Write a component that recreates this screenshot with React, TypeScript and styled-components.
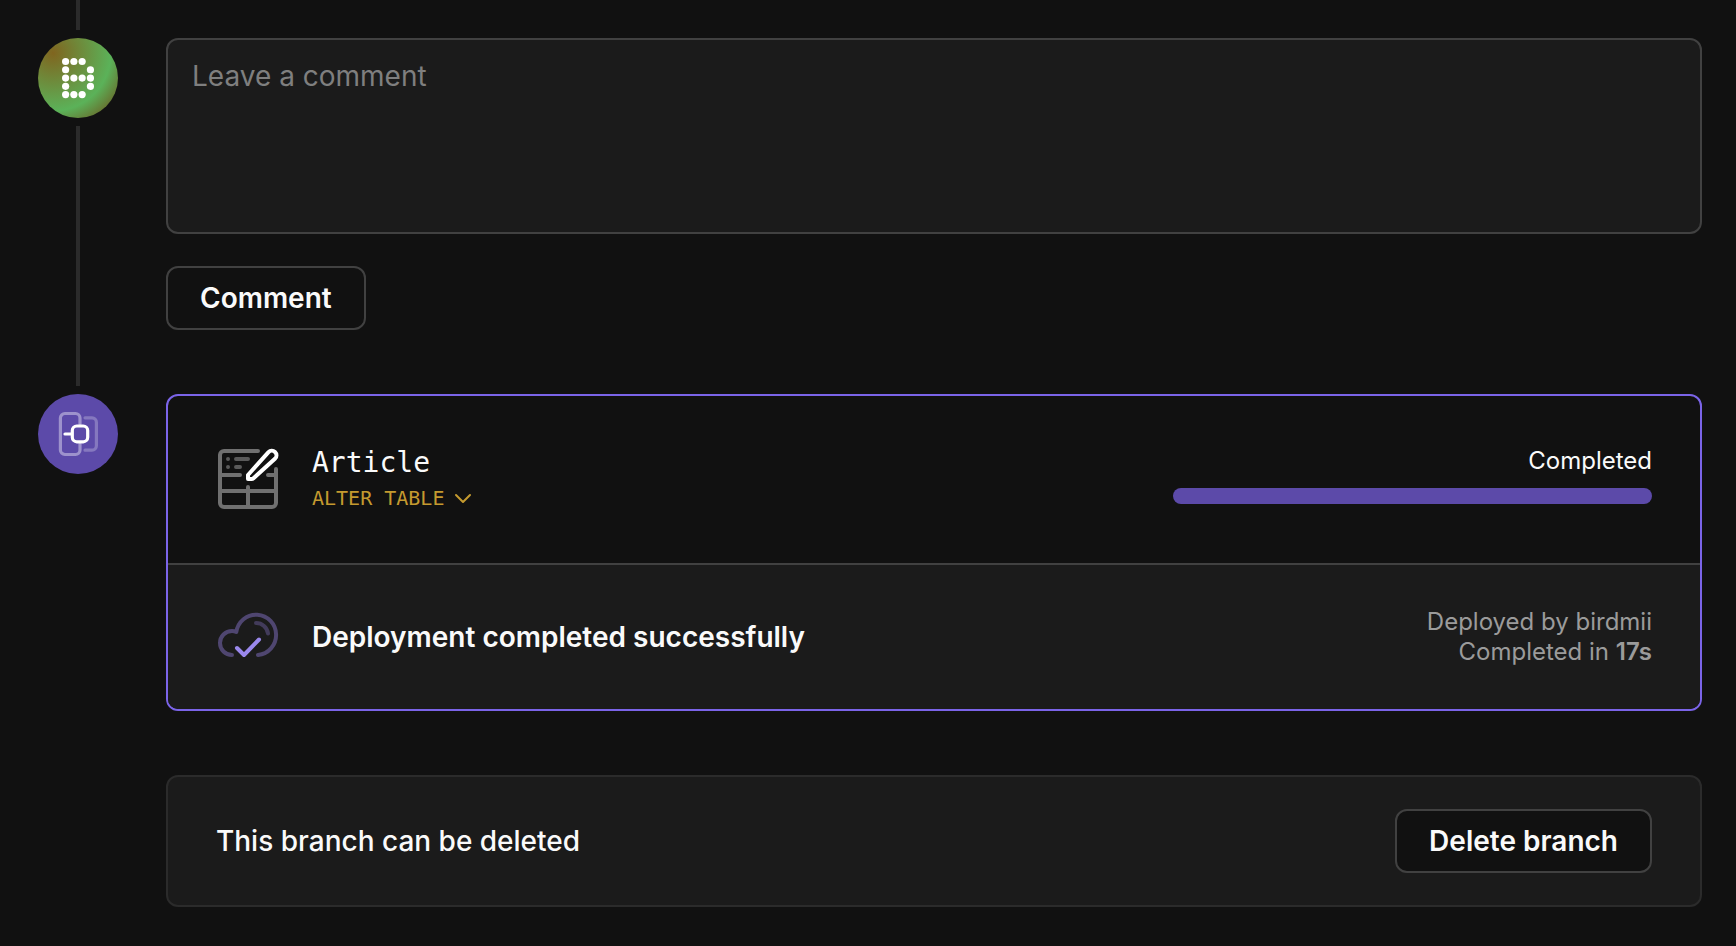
import React from 'react';
import styled, { createGlobalStyle } from 'styled-components';

const color = {
  page: '#111111',
  surface: '#1b1b1b',
  line: '#2b2b2b',
  border: '#414141',
  text: '#fafafa',
  muted: '#9b9b9b',
  placeholder: '#7f7f7f',
  accent: '#7b64e8',
  accentFill: '#5c4aa9',
  warning: '#c49a2f',
};

const GlobalStyle = createGlobalStyle`
  *, *::before, *::after { box-sizing: border-box; }
  body {
    margin: 0;
    background: ${color.page};
    color: ${color.text};
    font-family: Inter, 'Liberation Sans', sans-serif;
    font-size: 28px;
    line-height: 40px;
  }
  svg { display: block; flex: none; }
`;

const Page = styled.main`
  padding: 0 34px 36px 38px;
`;

const Entry = styled.section`
  display: grid;
  grid-template-columns: 80px minmax(0, 1fr);
  column-gap: 48px;
`;

const Rail = styled.div`
  display: flex;
  flex-direction: column;
  align-items: center;
  gap: 8px;
`;

const RailLine = styled.span<{ $stub?: boolean }>`
  width: 4px;
  background: ${color.line};
  flex: ${(p) => (p.$stub ? '0 0 30px' : '1 1 auto')};
`;

const Badge = styled.span<{ $background: string }>`
  display: flex;
  align-items: center;
  justify-content: center;
  flex: none;
  width: 80px;
  height: 80px;
  border-radius: 50%;
  background: ${(p) => p.$background};
`;

const RailEnd = styled(Rail)`
  padding-bottom: 8px;
`;

const CommentForm = styled.form`
  display: flex;
  flex-direction: column;
  align-items: flex-start;
  gap: 32px;
  padding: 38px 0 64px;
`;

const CommentBox = styled.textarea`
  display: block;
  width: 100%;
  height: 196px;
  padding: 16px 24px;
  border: 2px solid ${color.border};
  border-radius: 12px;
  background: ${color.surface};
  color: ${color.text};
  font: inherit;
  resize: none;
  &::placeholder { color: ${color.placeholder}; opacity: 1; }
`;

const Button = styled.button`
  height: 64px;
  padding: 0 32px;
  border: 2px solid ${color.border};
  border-radius: 12px;
  background: ${color.page};
  color: ${color.text};
  font: inherit;
  font-weight: 600;
  white-space: nowrap;
  cursor: pointer;
`;

const Stack = styled.div`
  display: flex;
  flex-direction: column;
  gap: 64px;
`;

const DeployCard = styled.article`
  border: 2px solid ${color.accent};
  border-radius: 12px;
  overflow: hidden;
`;

const ChangeRow = styled.div`
  display: grid;
  grid-template-columns: 2fr 1fr;
  align-items: start;
  min-height: 169px;
  padding: 48px;
  border-bottom: 2px solid ${color.border};
`;

const StatusRow = styled.div`
  display: flex;
  align-items: center;
  justify-content: space-between;
  min-height: 144px;
  padding: 0 48px;
  background: ${color.surface};
`;

const Lead = styled.div`
  display: flex;
  align-items: center;
  gap: 32px;
`;

const TableName = styled.div`
  font-family: 'DejaVu Sans Mono', monospace;
  line-height: 38px;
`;

const ChangeToggle = styled.button`
  display: flex;
  align-items: center;
  gap: 10px;
  padding: 0;
  border: 0;
  background: none;
  color: ${color.warning};
  font-family: 'DejaVu Sans Mono', monospace;
  font-size: 20px;
  line-height: 32px;
  cursor: pointer;
`;

const Progress = styled.div`
  display: flex;
  flex-direction: column;
  gap: 10px;
  font-size: 24px;
  line-height: 34px;
  text-align: right;
`;

const Track = styled.div`
  height: 16px;
  border-radius: 8px;
  background: ${color.line};
  overflow: hidden;
`;

const Fill = styled.div`
  height: 100%;
  background: ${color.accentFill};
`;

const Heading = styled.h2`
  margin: 0;
  font-size: 28px;
  font-weight: 600;
`;

const Meta = styled.div`
  color: ${color.muted};
  font-size: 24px;
  line-height: 30px;
  text-align: right;
  strong { font-weight: 600; }
`;

const BranchCard = styled.article`
  display: flex;
  align-items: center;
  justify-content: space-between;
  min-height: 132px;
  padding: 0 48px;
  border: 2px solid ${color.line};
  border-radius: 12px;
  background: ${color.surface};
  font-weight: 500;
`;

const avatarDots = ['1110', '1001', '1111', '1001', '1110'];

const AvatarGlyph = () => (
  <svg width="32" height="42" viewBox="0 0 32 42" fill="#fff" aria-hidden="true">
    {avatarDots.flatMap((row, y) =>
      [...row].map((on, x) =>
        on === '1' ? (
          <circle key={`${x}-${y}`} cx={3.6 + x * 8.27} cy={4.5 + y * 8.27} r="3.6" />
        ) : null,
      ),
    )}
  </svg>
);

const DeployGlyph = () => (
  <svg width="80" height="80" viewBox="0 0 80 80" fill="none" stroke="#fff" strokeWidth="3.2" strokeLinecap="round" aria-hidden="true">
    <path d="M42 30V24a4.5 4.5 0 0 0-4.5-4.5H27A4.500 4.500 0 0 0 22.400 24V56a4.500 4.500 0 0 0 4.600 4.500H37.500A4.500 4.500 0 0 0 42 56V50" stroke="#9d92cc" />
    <path d="M47 23.800H54a4.400 4.400 0 0 1 4.400 4.400V51.800a4.400 4.400 0 0 1-4.400 4.400H47" stroke="#8578bf" />
    <rect x="34.300" y="32" width="15.400" height="15.800" rx="4.500" fill={color.accentFill} />
    <path d="M27 40H33" />
  </svg>
);

const TableEditIcon = () => (
  <svg width="64" height="64" viewBox="0 0 64 64" fill="none" strokeWidth="4" strokeLinecap="round" strokeLinejoin="round" aria-hidden="true">
    <g stroke="#707070">
      <path d="M42 4H8a4 4 0 0 0-4 4V56a4 4 0 0 0 4 4H56a4 4 0 0 0 4-4V22" />
      <path d="M4 28H24M52 28H60M4 44H60M32 40V60" />
    </g>
    <path d="M12 12h.01M20 12H32M12 20h.01M20 20H24" stroke="#5a5a5a" />
    <path d="M34 32H32V28L52.500 5.200a4.500 4.500 0 0 1 6.700 6.300L37.500 31.200A3 3 0 0 1 35.500 32Z" stroke="#fff" />
  </svg>
);

const CloudCheckIcon = () => (
  <svg width="64" height="64" viewBox="0 0 64 64" fill="none" strokeWidth="4" strokeLinecap="round" strokeLinejoin="round" aria-hidden="true">
    <path d="M16 50A12 12 0 0 1 16 26C17.500 26 19 26.300 20.300 27A20 20.200 0 1 1 42 50" stroke="#4f4670" />
    <path d="M40 18A12 12 0 0 1 52 28.500" stroke="#423b5a" />
    <path d="M21 43L28 50L43 34.500" stroke="#9a88ec" />
  </svg>
);

const Chevron = () => (
  <svg width="18" height="16" viewBox="0 0 18 16" fill="none" stroke="currentColor" strokeWidth="2" strokeLinecap="round" strokeLinejoin="round" aria-hidden="true">
    <path d="M2 5L9 12L16 5" />
  </svg>
);

export default function App() {
  return (
    <>
      <GlobalStyle />
      <Page>
        <Entry>
          <RailEnd>
            <RailLine $stub />
            <Badge $background="radial-gradient(circle at 15px 15px, #80651f 0, #5bb259 58px, #6b5a20 84px)">
              <AvatarGlyph />
            </Badge>
            <RailLine />
          </RailEnd>
          <CommentForm onSubmit={(e) => e.preventDefault()}>
            <CommentBox placeholder="Leave a comment" aria-label="Leave a comment" />
            <Button type="submit">Comment</Button>
          </CommentForm>
        </Entry>
        <Entry>
          <Rail>
            <Badge $background={color.accentFill}>
              <DeployGlyph />
            </Badge>
          </Rail>
          <Stack>
            <DeployCard>
              <ChangeRow>
                <Lead>
                  <TableEditIcon />
                  <div>
                    <TableName>Article</TableName>
                    <ChangeToggle type="button" aria-expanded="false">
                      ALTER TABLE
                      <Chevron />
                    </ChangeToggle>
                  </div>
                </Lead>
                <Progress>
                  <span>Completed</span>
                  <Track role="progressbar" aria-label="Article" aria-valuenow={100} aria-valuemin={0} aria-valuemax={100}>
                    <Fill style={{ width: '100%' }} />
                  </Track>
                </Progress>
              </ChangeRow>
              <StatusRow>
                <Lead>
                  <CloudCheckIcon />
                  <Heading>Deployment completed successfully</Heading>
                </Lead>
                <Meta>
                  <div>Deployed by birdmii</div>
                  <div>
                    Completed in <strong>17s</strong>
                  </div>
                </Meta>
              </StatusRow>
            </DeployCard>
            <BranchCard>
              <span>This branch can be deleted</span>
              <Button type="button">Delete branch</Button>
            </BranchCard>
          </Stack>
        </Entry>
      </Page>
    </>
  );
}
